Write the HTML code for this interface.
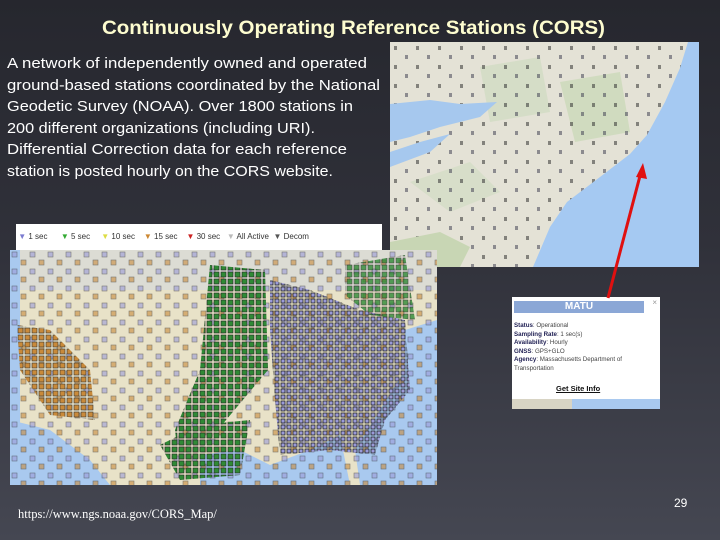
<!DOCTYPE html>
<html><head><meta charset="utf-8"><style>
body{margin:0;width:720px;height:540px;overflow:hidden;background:linear-gradient(180deg,#26272e 0%,#30313a 45%,#454752 100%);font-family:"Liberation Sans",sans-serif;position:relative}
.ab{position:absolute}
.url{position:absolute;left:18px;top:507px;color:#fff;font:12.5px "Liberation Serif",serif}
.n{position:absolute;left:674px;top:496px;color:#fff;font-size:12px}
</style></head><body>
<svg class="ab" style="left:0;top:0" width="720" height="200">
<text x="102" y="34" textLength="503" lengthAdjust="spacingAndGlyphs" fill="#fdfccf" font-family="Liberation Sans" font-weight="bold" font-size="19.5">Continuously Operating Reference Stations (CORS)</text>
<g fill="#fff" font-family="Liberation Sans" font-size="15">
<text x="7" y="68" textLength="360" lengthAdjust="spacingAndGlyphs">A network of independently owned and operated</text>
<text x="7" y="90" textLength="373" lengthAdjust="spacingAndGlyphs">ground-based stations coordinated by the National</text>
<text x="7" y="111" textLength="346" lengthAdjust="spacingAndGlyphs">Geodetic Survey (NOAA).  Over 1800 stations in</text>
<text x="7" y="133" textLength="308" lengthAdjust="spacingAndGlyphs">200 different organizations (including URI).</text>
<text x="7" y="154" textLength="340" lengthAdjust="spacingAndGlyphs">Differential Correction data for each reference</text>
<text x="7" y="176" textLength="326" lengthAdjust="spacingAndGlyphs">station is posted hourly on the CORS website.</text>
</g>
</svg>

<svg class="ab" style="left:390px;top:42px" width="309" height="225">
<defs><pattern id="p1" width="22" height="19" patternUnits="userSpaceOnUse"><rect x="4" y="4" width="3" height="4" fill="#333"/><rect x="15" y="13" width="3" height="4" fill="#445"/></pattern></defs>
<rect width="309" height="225" fill="#e4e2d6"/>
<path d="M90 25 L150 15 L160 70 L100 80Z" fill="#cfdcc0" opacity=".7"/>
<path d="M170 40 L230 30 L240 90 L185 100Z" fill="#c8d8b5" opacity=".7"/>
<path d="M20 140 L80 120 L110 150 L60 170Z" fill="#cfdcc0" opacity=".6"/>
<rect x="0" y="0" width="309" height="225" fill="url(#p1)" opacity=".55"/>
<path d="M0 62 L40 58 L70 62 L107 60 L90 75 L50 85 L20 95 L0 100Z" fill="#a6c8ee"/>
<path d="M0 110 L30 100 L60 92 L40 110 L0 125Z" fill="#a6c8ee"/>
<path d="M298 0 L309 0 L309 225 L143 225 L160 185 L177 160 L210 135 L240 112 L257 93 L275 60 L290 26Z" fill="#a5c9f2"/>
<path d="M0 200 L50 190 L80 205 L70 225 L0 225Z" fill="#c8d6b4"/>
</svg>

<div class="ab" style="left:16px;top:224px;width:366px;height:26px;background:#fff;font-size:8px;color:#333;line-height:26px;white-space:nowrap">
&nbsp;<span style="color:#7c7cd0">▼</span> 1 sec &nbsp;&nbsp;&nbsp;&nbsp;&nbsp;<span style="color:#3a3">▼</span> 5 sec &nbsp;&nbsp;&nbsp;&nbsp;<span style="color:#dd4">▼</span> 10 sec &nbsp;&nbsp;&nbsp;<span style="color:#c83">▼</span> 15 sec &nbsp;&nbsp;&nbsp;<span style="color:#c22">▼</span> 30 sec &nbsp;&nbsp;<span style="color:#bbb">▼</span> All Active &nbsp;<span style="color:#555">▼</span> Decom</div>

<svg class="ab" style="left:10px;top:250px" width="427" height="235">
<defs>
<pattern id="po" width="7" height="7" patternUnits="userSpaceOnUse"><rect x="1" y="1" width="5" height="5" fill="#c98a3a" stroke="#333" stroke-width=".6"/></pattern>
<pattern id="pg" width="7" height="7" patternUnits="userSpaceOnUse"><rect x="1" y="1" width="5" height="5" fill="#2f8a35" stroke="#222" stroke-width=".6"/></pattern>
<pattern id="pp" width="6" height="6" patternUnits="userSpaceOnUse"><rect x="1" y="1" width="4" height="4" fill="#9a9ad8" stroke="#222" stroke-width=".8"/></pattern>
<pattern id="ps" width="18" height="17" patternUnits="userSpaceOnUse"><rect x="2" y="2" width="5" height="5" fill="#9a9ad8" stroke="#333" stroke-width=".6"/><rect x="11" y="10" width="5" height="5" fill="#c98a3a" stroke="#333" stroke-width=".6"/></pattern>
</defs>
<rect width="427" height="235" fill="#e8e2c8"/>
<rect width="427" height="40" fill="#dcdcd4"/>
<rect x="0" y="0" width="10" height="235" fill="#a9c9ef"/>
<path d="M0 170 L40 180 L80 210 L100 235 L0 235Z" fill="#a9c9ef"/>
<path d="M190 205 L230 200 L260 215 L300 200 L330 185 L340 235 L190 235Z" fill="#a9c9ef"/>
<path d="M395 80 L427 70 L427 235 L350 235 L345 200 L370 160 L395 120Z" fill="#a9c9ef"/>
<rect x="0" y="0" width="427" height="235" fill="url(#ps)" opacity=".6"/>
<path d="M7 75 L40 80 L80 120 L85 170 L40 165 L10 120Z" fill="url(#po)"/>
<path d="M200 15 L255 20 L258 120 L170 225 L165 180 L190 120Z" fill="url(#pg)"/>
<path d="M150 195 L190 175 L240 170 L230 225 L170 230Z" fill="url(#pg)"/>
<path d="M260 30 L300 40 L350 60 L395 70 L400 140 L375 170 L365 205 L320 200 L270 205 L265 150 L260 80Z" fill="url(#pp)"/>
<path d="M335 15 L395 5 L405 70 L360 65 L335 45Z" fill="url(#pg)" opacity=".8"/>
</svg>

<div class="ab" style="left:512px;top:297px;width:148px;height:112px;background:#fff">
<div style="position:absolute;left:2px;top:4px;width:130px;height:12px;background:#8ba7d6;color:#fff;font-weight:bold;font-size:10px;text-align:center;line-height:12px">MATU</div>
<div style="position:absolute;right:3px;top:1px;font-size:8px;color:#999">×</div>
<div style="position:absolute;left:2px;top:25px;font-size:6.2px;line-height:8.6px;color:#444"><b style="color:#225">Status</b>: Operational<br><b style="color:#225">Sampling Rate</b>: 1 sec(s)<br><b style="color:#225">Availability</b>: Hourly<br><b style="color:#225">GNSS</b>: GPS+GLO<br><b style="color:#225">Agency</b>: Massachusetts Department of Transportation</div>
<div style="position:absolute;left:44px;top:87px;font-size:7.5px;font-weight:bold;text-decoration:underline;color:#111">Get Site Info</div>
<div style="position:absolute;left:0;top:102px;width:148px;height:10px;background:#a9c9ef"></div>
<div style="position:absolute;left:0;top:102px;width:60px;height:10px;background:#d8d4c4"></div>
</div>

<svg class="ab" style="left:0;top:0" width="720" height="540">
<line x1="608" y1="298" x2="641" y2="172" stroke="#e01010" stroke-width="3"/>
<polygon points="643,163 636,177 647,179" fill="#e01010"/>
</svg>
<div class="url">https://www.ngs.noaa.gov/CORS_Map/</div>
<div class="n">29</div>
</body></html>
